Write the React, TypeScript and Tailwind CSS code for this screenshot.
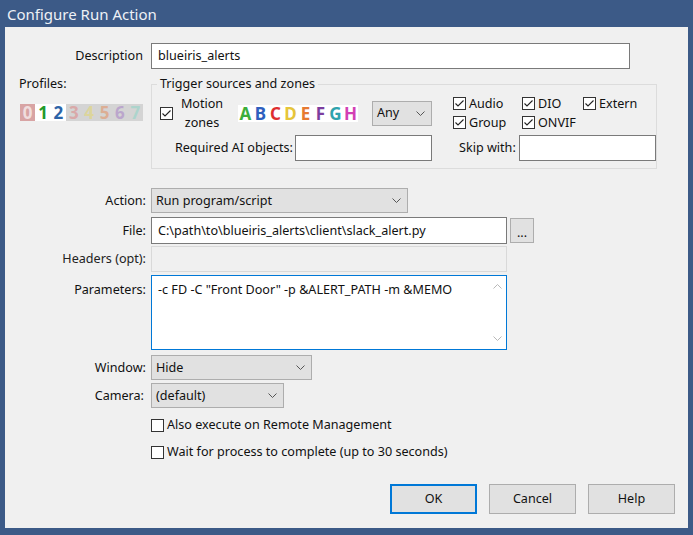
const FONT = "font-['Noto_Sans','Liberation_Sans',sans-serif]";

const PROFILES = [
  { n: '0', cell: 'bg-[#d8a4a4]', text: 'text-[#f0dede]' },
  { n: '1', cell: 'bg-white', text: 'text-[#1f9a2a]' },
  { n: '2', cell: 'bg-white', text: 'text-[#2d64a8]' },
  { n: '3', cell: 'bg-[#d4d4d4]', text: 'text-[#d9a9a9]' },
  { n: '4', cell: 'bg-[#d4d4d4]', text: 'text-[#dcd59c]' },
  { n: '5', cell: 'bg-[#d4d4d4]', text: 'text-[#dcae94]' },
  { n: '6', cell: 'bg-[#d4d4d4]', text: 'text-[#bba6cc]' },
  { n: '7', cell: 'bg-[#d4d4d4]', text: 'text-[#acd4cc]' },
];

const ZONES = [
  { l: 'A', c: 'text-[#3cae3a]' },
  { l: 'B', c: 'text-[#2e5fbf]' },
  { l: 'C', c: 'text-[#de2f2f]' },
  { l: 'D', c: 'text-[#e6c53a]' },
  { l: 'E', c: 'text-[#e67a32]' },
  { l: 'F', c: 'text-[#7c3d9e]' },
  { l: 'G', c: 'text-[#2fa3ad]' },
  { l: 'H', c: 'text-[#d23fb4]' },
];

function Chevron({ className = '' }: { className?: string }) {
  return (
    <svg width="9" height="5" viewBox="0 0 9 5" className={className}>
      <path d="M0.5 0.5 L4.5 4.5 L8.5 0.5" fill="none" stroke="currentColor" strokeWidth="1" />
    </svg>
  );
}

function CheckBox({ checked }: { checked?: boolean }) {
  return (
    <span className="flex h-[13px] w-[13px] shrink-0 items-center justify-center border border-[#333] bg-white">
      {checked && (
        <svg width="11" height="11" viewBox="0 0 11 11">
          <path d="M1.5 5.5 L4 8 L9.5 2.5" fill="none" stroke="#222" strokeWidth="1.1" />
        </svg>
      )}
    </span>
  );
}

function Combo({ value, w, h }: { value: string; w: string; h: string }) {
  return (
    <div className={`flex ${w} ${h} items-center justify-between border border-[#adadad] bg-[#e1e1e1] pl-[4px] pr-[6px]`}>
      <span>{value}</span>
      <Chevron className="text-[#555]" />
    </div>
  );
}

function Label({ children, className = '' }: { children: React.ReactNode; className?: string }) {
  return <div className={`w-[141px] shrink-0 text-right ${className}`}>{children}</div>;
}

function Check({ label, checked, className = '' }: { label: string; checked?: boolean; className?: string }) {
  return (
    <div className={`flex items-center gap-[3px] whitespace-nowrap ${className}`}>
      <CheckBox checked={checked} />
      <span>{label}</span>
    </div>
  );
}

export default function App() {
  return (
    <div className={`flex h-[535px] w-[693px] flex-col bg-[#3c5a87] px-[5px] pb-[7px] text-[12.6px] leading-[16px] text-[#111] ${FONT}`}>
      <div className="flex h-[27px] shrink-0 items-center pl-[2px] text-[15px] text-[#eef1f6]">Configure Run Action</div>

      <div className="flex flex-1 flex-col bg-[#f0f0f0]">
        {/* description */}
        <div className="mt-[16px] flex items-center">
          <Label className="pr-[3px]">Description</Label>
          <div className="ml-[5px] flex h-[26px] w-[479px] items-center border border-[#7a7a7a] bg-white px-[6px]">blueiris_alerts</div>
        </div>

        {/* profiles + trigger group */}
        <div className="mt-[7px] flex">
          <div className="w-[146px] shrink-0 pl-[14px]">
            <div>Profiles:</div>
            <div className="mt-[12px] ml-[1px] flex h-[17px] w-[123px]">
              {PROFILES.map((p) => (
                <span
                  key={p.n}
                  className={`flex w-[15.4px] items-center justify-center text-[17px] leading-[17px] font-bold ${p.cell} ${p.text}`}
                >
                  {p.n}
                </span>
              ))}
            </div>
          </div>

          <fieldset className="h-[93px] w-[506px] border border-[#dcdcdc]">
            <legend className="ml-[5px] px-[3px]">Trigger sources and zones</legend>

            <div className="mt-[4px] flex h-[34px] items-center pl-[8px]">
              <CheckBox checked />
              <div className="ml-[3px] w-[52px] text-center leading-[19px]">
                Motion
                <br />
                zones
              </div>
              <div className="ml-[10px] flex h-[17px] w-[120px] bg-white">
                {ZONES.map((z) => (
                  <span
                    key={z.l}
                    className={`flex w-[15px] items-center justify-center text-[17px] leading-[17px] font-bold [text-shadow:0_0_1px_#fff] ${z.c}`}
                  >
                    {z.l}
                  </span>
                ))}
              </div>
              <div className="ml-[14px]">
                <Combo value="Any" w="w-[60px]" h="h-[25px]" />
              </div>
              <div className="ml-[21px] grid grid-cols-[69px_61px_70px] grid-rows-[19px_19px] items-center">
                <Check label="Audio" checked />
                <Check label="DIO" checked />
                <Check label="Extern" checked />
                <Check label="Group" checked />
                <Check label="ONVIF" checked />
              </div>
            </div>

            <div className="mt-[5px] flex items-center whitespace-nowrap pl-[8px]">
              <div className="w-[133px] text-right">Required AI objects:</div>
              <div className="ml-[2px] h-[26px] w-[137px] border border-[#7a7a7a] bg-white" />
              <div className="ml-[27px] w-[56px] text-right">Skip with:</div>
              <div className="ml-[4px] h-[26px] w-[137px] border border-[#7a7a7a] bg-white" />
            </div>
          </fieldset>
        </div>

        {/* action */}
        <div className="mt-[19px] flex items-center">
          <Label>Action:</Label>
          <div className="ml-[5px]">
            <Combo value="Run program/script" w="w-[257px]" h="h-[25px]" />
          </div>
        </div>

        <div className="mt-[4px] flex items-center">
          <Label>File:</Label>
          <div className="ml-[5px] flex h-[27px] w-[356px] items-center border border-[#7a7a7a] bg-white px-[6px]">
            C:\path\to\blueiris_alerts\client\slack_alert.py
          </div>
          <button className="ml-[3px] flex h-[25px] w-[24px] items-end justify-center border border-[#adadad] bg-[#e1e1e1] pb-[4px] leading-[10px]">
            ...
          </button>
        </div>

        <div className="mt-[2px] flex items-center">
          <Label className="text-[#222]">Headers (opt):</Label>
          <div className="ml-[5px] h-[26px] w-[356px] border border-[#d9d9d9] bg-[#f0f0f0]" />
        </div>

        <div className="mt-[3px] flex items-start">
          <Label className="pt-[7px]">Parameters:</Label>
          <div className="ml-[5px] flex h-[75px] w-[356px] border border-[#0078d7] bg-white">
            <div className="flex-1 pl-[6px] pt-[6px]">-c FD -C "Front Door" -p &amp;ALERT_PATH -m &amp;MEMO</div>
            <div className="flex w-[17px] flex-col items-center justify-between py-[8px] text-[#b8b8b8]">
              <Chevron className="rotate-180" />
              <Chevron />
            </div>
          </div>
        </div>

        <div className="mt-[5px] flex items-center">
          <Label>Window:</Label>
          <div className="ml-[5px]">
            <Combo value="Hide" w="w-[161px]" h="h-[25px]" />
          </div>
        </div>

        <div className="mt-[3px] flex items-center">
          <Label className="pr-[2px]">Camera:</Label>
          <div className="ml-[5px]">
            <Combo value="(default)" w="w-[133px]" h="h-[25px]" />
          </div>
        </div>

        <div className="ml-[146px] mt-[7px] flex h-[20px] items-center">
          <Check label="Also execute on Remote Management" />
        </div>
        <div className="ml-[146px] mt-[7px] flex h-[20px] items-center">
          <Check label="Wait for process to complete (up to 30 seconds)" />
        </div>

        <div className="mt-[22px] flex justify-end gap-[12px] pr-[13px]">
          <button className="h-[30px] w-[87px] border-2 border-[#0078d7] bg-[#e1e1e1]">OK</button>
          <button className="h-[30px] w-[87px] border border-[#adadad] bg-[#e1e1e1]">Cancel</button>
          <button className="h-[30px] w-[87px] border border-[#adadad] bg-[#e1e1e1]">Help</button>
        </div>
      </div>
    </div>
  );
}
